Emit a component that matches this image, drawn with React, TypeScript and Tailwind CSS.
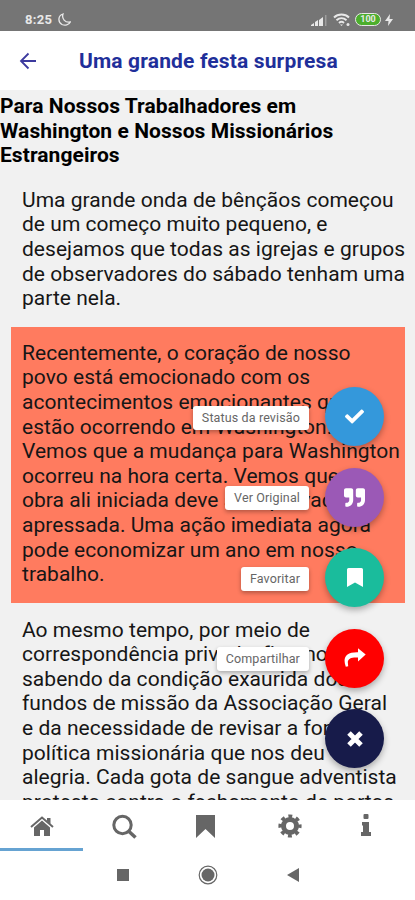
import type { ReactNode } from 'react'
import { FaCheck, FaQuoteRight } from 'react-icons/fa'

const titulo = ['Para Nossos Trabalhadores em', 'Washington e Nossos Missionários', 'Estrangeiros']

const paragrafos = [
  {
    destaque: false,
    linhas: [
      'Uma grande onda de bênçãos começou',
      'de um começo muito pequeno, e',
      'desejamos que todas as igrejas e grupos',
      'de observadores do sábado tenham uma',
      'parte nela.',
    ],
  },
  {
    destaque: true,
    linhas: [
      'Recentemente, o coração de nosso',
      'povo está emocionado com os',
      'acontecimentos emocionantes que',
      'estão ocorrendo em Washington.',
      'Vemos que a mudança para Washington',
      'ocorreu na hora certa. Vemos que a',
      'obra ali iniciada deve ser aprovada e',
      'apressada. Uma ação imediata agora',
      'pode economizar um ano em nosso',
      'trabalho.',
    ],
  },
  {
    destaque: false,
    linhas: [
      'Ao mesmo tempo, por meio de',
      'correspondência privada, ficamos',
      'sabendo da condição exaurida dos',
      'fundos de missão da Associação Geral',
      'e da necessidade de revisar a forte',
      'política missionária que nos deu',
      'alegria. Cada gota de sangue adventista',
      'protesta contra o fechamento de portas',
    ],
  },
]

type Acao = { texto?: string; cor: string; icono: ReactNode }

const acoes: Acao[] = [
  { texto: 'Status da revisão', cor: 'bg-[#3498db]', icono: <FaCheck size={19} /> },
  { texto: 'Ver Original', cor: 'bg-[#9b59b6]', icono: <FaQuoteRight size={21} /> },
  {
    texto: 'Favoritar',
    cor: 'bg-[#1abc9c]',
    icono: (
      <svg width="16" height="19" viewBox="0 0 16 19" fill="currentColor">
        <path d="M1.5 0h13A1.5 1.5 0 0 1 16 1.500V19l-8-4.500L0 19V1.500A1.500 1.500 0 0 1 1.500 0z" />
      </svg>
    ),
  },
  {
    texto: 'Compartilhar',
    cor: 'bg-[#ff0000]',
    icono: (
      <svg width="22" height="20" viewBox="0 0 22 20" fill="currentColor">
        <path d="M14 0.300L21.700 6.500L14 13.500V9.600C8 9.100 4.200 10.500 3.800 14L4.200 18.200L1.800 18.800C-1.500 10 1.500 4 14 4.300z" />
      </svg>
    ),
  },
  {
    cor: 'bg-[#171b4a]',
    icono: (
      <svg width="16" height="16" viewBox="0 0 16 16" fill="none" stroke="currentColor" strokeWidth="5">
        <path d="M2 2l12 12M14 2L2 14" />
      </svg>
    ),
  },
]

function StatusBar() {
  return (
    <div className="h-[31px] shrink-0 bg-[#757575] flex items-center justify-between pl-[25px] pr-[22px] pt-2 text-[#e8e8e8]">
      <div className="flex items-center gap-1.5">
        <span className="text-[13px] leading-none font-bold tracking-[0.3px]">8:25</span>
        <svg width="13" height="13" viewBox="0 0 13 13" fill="none" stroke="currentColor" strokeWidth="1.3">
          <path d="M5 1C0 2.500-.500 9 4 11.500C7 13 11 12 12.300 9C7 10 3.500 5.500 5 1z" />
        </svg>
      </div>
      <div className="flex items-center">
        <svg width="16" height="12" viewBox="0 0 16 12" fill="currentColor">
          <path d="M0 11L3 9v3H0zM4 8l3-2v6H4zM8 6l4-3v9H8z" />
          <path d="M14 1h1.500v11H14z" opacity=".35" />
        </svg>
        <svg className="ml-1.5" width="18" height="14" viewBox="0 0 18 14" fill="none" stroke="currentColor" strokeWidth="1.9">
          <path d="M1 4.500C5 .500 12 .500 16 4.500M3.500 7.300c3-2.800 7-2.800 10 0M6 10c1.500-1.400 3.500-1.400 5 0" />
          <path d="M7 11.500h3L8.500 13z" stroke="none" fill="currentColor" />
          <circle cx="15" cy="11.500" r="1.500" fill="currentColor" stroke="none" />
        </svg>
        <div className="ml-1 w-[26px] h-[13px] rounded-full border-[1.5px] border-[#e8e8e8] bg-[#4cae2d] flex items-center justify-center text-[9px] leading-none font-bold">
          100
        </div>
        <svg className="ml-1" width="8" height="12" viewBox="0 0 8 12" fill="currentColor">
          <path d="M5 0L0 7h3.500L3 12l5-7H4.500z" />
        </svg>
      </div>
    </div>
  )
}

function Header() {
  return (
    <header className="h-[59px] shrink-0 bg-white flex items-center pl-[19px]">
      <svg width="18" height="18" viewBox="0 0 18 18" fill="none" stroke="#3c3a9e" strokeWidth="1.800">
        <path d="M17 9H2M9.500 1.500L2 9l7.500 7.500" />
      </svg>
      <h1 className="ml-[42px] pt-0.5 text-[21px] leading-none font-bold text-[#1f2f9a] tracking-[0.150px] whitespace-nowrap">
        Uma grande festa surpresa
      </h1>
    </header>
  )
}

function Artigo() {
  return (
    <article className="flex-1 min-h-0 overflow-hidden bg-[#f1f1f1] pt-[4px] text-[21px] leading-[24.6px] tracking-[0.030px] text-[#161616]">
      <h2 className="font-bold text-[21px] tracking-[0.060px] text-black">
        {titulo.map((l) => (
          <span key={l} className="block whitespace-nowrap">{l}</span>
        ))}
      </h2>
      <div className="mt-[8px] ml-[11px] mr-[10px]">
        {paragrafos.map((p, i) => (
          <p key={i} className={p.destaque ? 'bg-[#ff7b5f] pl-[11px] pt-[14px] pb-[16px]' : 'pl-[11px] pt-[12px] pb-[16px] last:pt-[15px]'}>
            {p.linhas.map((l) => (
              <span key={l} className="block whitespace-nowrap">{l}</span>
            ))}
          </p>
        ))}
      </div>
    </article>
  )
}

function Acoes() {
  return (
    <div className="absolute right-[31px] top-[387px] flex flex-col items-end gap-[21.500px]">
      {acoes.map((a) => (
        <div key={a.cor} className="flex items-center gap-4">
          {a.texto && (
            <span className="mt-0.5 h-[24px] px-[9px] rounded-[3px] bg-white shadow-[0_2px_4px_rgba(0,0,0,0.3)] text-[12.500px] leading-[24px] tracking-[0.130px] text-[#666] whitespace-nowrap">
              {a.texto}
            </span>
          )}
          <button className={`size-[59px] rounded-full shadow-[0_3px_6px_rgba(0,0,0,0.3)] flex items-center justify-center text-white ${a.cor}`}>
            {a.icono}
          </button>
        </div>
      ))}
    </div>
  )
}

function TabBar() {
  return (
    <nav className="h-[51px] shrink-0 bg-white grid grid-cols-5 text-[#666]">
      <div className="flex items-center justify-center pt-1 border-b-[3px] border-[#66a3d2]">
        <svg width="24" height="20" viewBox="0 0 24 20" fill="currentColor">
          <path d="M12 4.500L20 11.500V20H14V14H10V20H4V11.500z" />
          <path d="M1 11L12 1.500L23 11" fill="none" stroke="currentColor" strokeWidth="2" />
          <path d="M17 2h3.500v6L17 5z" />
        </svg>
      </div>
      <div className="flex items-center justify-center pt-1 border-b-[3px] border-transparent">
        <svg width="25" height="25" viewBox="0 0 25 25" fill="none" stroke="currentColor">
          <circle cx="10.500" cy="11" r="8.700" strokeWidth="3" />
          <path d="M17 17.500l6.500 6" strokeWidth="3.500" />
        </svg>
      </div>
      <div className="flex items-center justify-center pt-1 pr-[5px] border-b-[3px] border-transparent">
        <svg width="19" height="23" viewBox="0 0 19 23" fill="currentColor">
          <path d="M0 0h19v23l-9.500-9L0 23z" />
        </svg>
      </div>
      <div className="flex items-center justify-center pt-1 pr-[2px] border-b-[3px] border-transparent">
        <svg width="24" height="24" viewBox="0 0 24 24" fill="none" stroke="currentColor">
          <circle cx="12" cy="12" r="6.500" strokeWidth="5" />
          <circle cx="12" cy="12" r="9.800" strokeWidth="3.600" strokeDasharray="3.850 3.847" strokeDashoffset="1.925" />
        </svg>
      </div>
      <div className="flex items-center justify-center pt-0.5 pr-[16px] border-b-[3px] border-transparent">
        <svg width="10" height="22" viewBox="0 0 10 22" fill="currentColor">
          <rect x="2.500" y="0" width="5" height="5" rx="1" />
          <path d="M1 8h7v10h2v4H0v-4h2v-6.500H1z" />
        </svg>
      </div>
    </nav>
  )
}

function SystemBar() {
  return (
    <div className="h-[49px] shrink-0 bg-white flex items-center justify-center gap-[69px] pb-px text-[#666]">
      <div className="size-[12px] bg-[#666]" />
      <svg width="20" height="20" viewBox="0 0 20 20" fill="currentColor">
        <circle cx="10" cy="10" r="6.500" />
        <circle cx="10" cy="10" r="8.800" fill="none" stroke="currentColor" strokeWidth="1.200" />
      </svg>
      <svg width="12" height="14" viewBox="0 0 12 14" fill="currentColor">
        <path d="M12 0v14L0 7z" />
      </svg>
    </div>
  )
}

export default function App() {
  return (
    <main className="relative w-[415px] h-[900px] overflow-hidden flex flex-col font-[Roboto,sans-serif]">
      <StatusBar />
      <Header />
      <Artigo />
      <TabBar />
      <SystemBar />
      <Acoes />
    </main>
  )
}
